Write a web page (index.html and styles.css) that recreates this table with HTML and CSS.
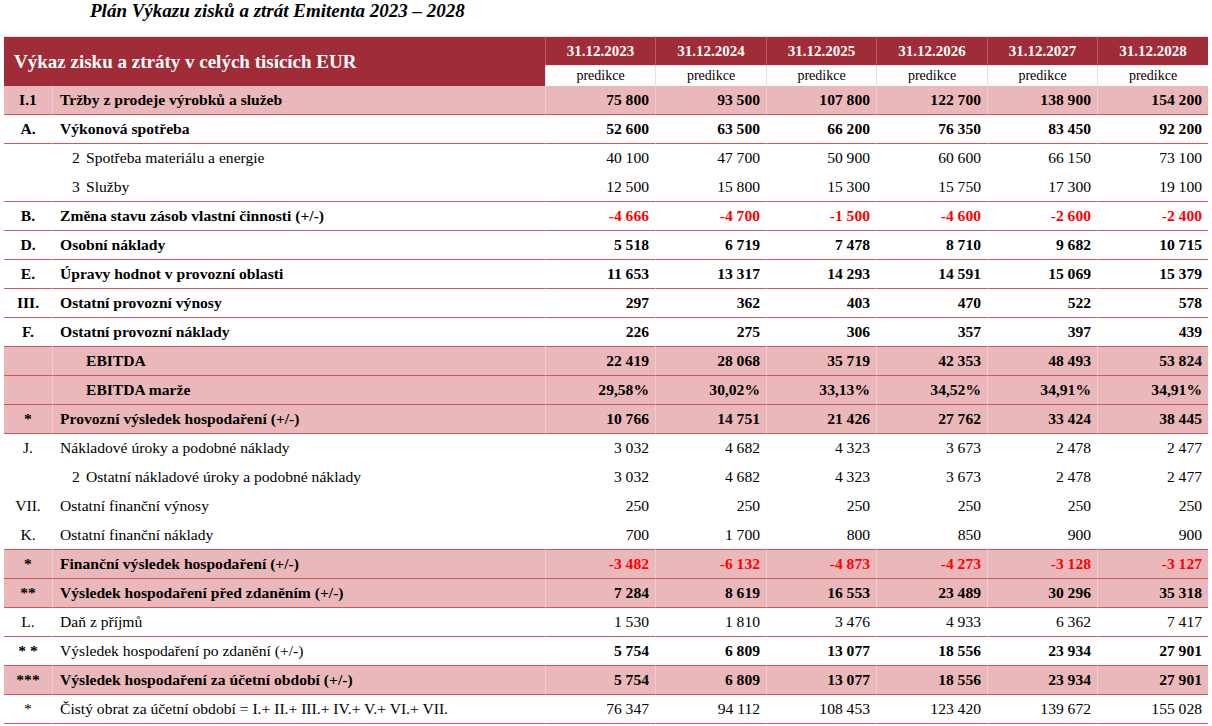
FILE: index.html
```html
<!DOCTYPE html>
<html lang="cs">
<head>
<meta charset="utf-8">
<title>Plán Výkazu zisků a ztrát Emitenta 2023 – 2028</title>
<link rel="stylesheet" href="styles.css">
</head>
<body>
<h1 class="title">Plán Výkazu zisků a ztrát Emitenta 2023 – 2028</h1>
<table class="pl">
  <colgroup>
    <col class="c-code"><col class="c-label">
    <col class="c-a"><col class="c-b"><col class="c-a"><col class="c-b"><col class="c-a"><col class="c-b">
  </colgroup>
  <thead>
    <tr class="h1">
      <th class="h-title" colspan="2" rowspan="2">Výkaz zisku a ztráty v celých tisících EUR</th>
      <th class="h-date">31.12.2023</th>
      <th class="h-date">31.12.2024</th>
      <th class="h-date">31.12.2025</th>
      <th class="h-date">31.12.2026</th>
      <th class="h-date">31.12.2027</th>
      <th class="h-date">31.12.2028</th>
    </tr>
    <tr class="h2">
      <td class="h-pred">predikce</td>
      <td class="h-pred">predikce</td>
      <td class="h-pred">predikce</td>
      <td class="h-pred">predikce</td>
      <td class="h-pred">predikce</td>
      <td class="h-pred">predikce</td>
    </tr>
  </thead>
  <tbody>
    <tr class="pink b">
      <td class="code">I.1</td><td class="lbl">Tržby z prodeje výrobků a služeb</td>
      <td class="v">75 800</td><td class="v">93 500</td><td class="v">107 800</td><td class="v">122 700</td><td class="v">138 900</td><td class="v">154 200</td>
    </tr>
    <tr class="b">
      <td class="code">A.</td><td class="lbl">Výkonová spotřeba</td>
      <td class="v">52 600</td><td class="v">63 500</td><td class="v">66 200</td><td class="v">76 350</td><td class="v">83 450</td><td class="v">92 200</td>
    </tr>
    <tr class="nb">
      <td class="code"></td><td class="lbl sub"><span class="n">2</span>Spotřeba materiálu a energie</td>
      <td class="v">40 100</td><td class="v">47 700</td><td class="v">50 900</td><td class="v">60 600</td><td class="v">66 150</td><td class="v">73 100</td>
    </tr>
    <tr>
      <td class="code"></td><td class="lbl sub"><span class="n">3</span>Služby</td>
      <td class="v">12 500</td><td class="v">15 800</td><td class="v">15 300</td><td class="v">15 750</td><td class="v">17 300</td><td class="v">19 100</td>
    </tr>
    <tr class="b neg">
      <td class="code">B.</td><td class="lbl">Změna stavu zásob vlastní činnosti (+/-)</td>
      <td class="v">-4 666</td><td class="v">-4 700</td><td class="v">-1 500</td><td class="v">-4 600</td><td class="v">-2 600</td><td class="v">-2 400</td>
    </tr>
    <tr class="b">
      <td class="code">D.</td><td class="lbl">Osobní náklady</td>
      <td class="v">5 518</td><td class="v">6 719</td><td class="v">7 478</td><td class="v">8 710</td><td class="v">9 682</td><td class="v">10 715</td>
    </tr>
    <tr class="b">
      <td class="code">E.</td><td class="lbl">Úpravy hodnot v provozní oblasti</td>
      <td class="v">11 653</td><td class="v">13 317</td><td class="v">14 293</td><td class="v">14 591</td><td class="v">15 069</td><td class="v">15 379</td>
    </tr>
    <tr class="b">
      <td class="code">III.</td><td class="lbl">Ostatní provozní výnosy</td>
      <td class="v">297</td><td class="v">362</td><td class="v">403</td><td class="v">470</td><td class="v">522</td><td class="v">578</td>
    </tr>
    <tr class="b">
      <td class="code">F.</td><td class="lbl">Ostatní provozní náklady</td>
      <td class="v">226</td><td class="v">275</td><td class="v">306</td><td class="v">357</td><td class="v">397</td><td class="v">439</td>
    </tr>
    <tr class="pink b">
      <td class="code"></td><td class="lbl ind">EBITDA</td>
      <td class="v">22 419</td><td class="v">28 068</td><td class="v">35 719</td><td class="v">42 353</td><td class="v">48 493</td><td class="v">53 824</td>
    </tr>
    <tr class="pink b">
      <td class="code"></td><td class="lbl ind">EBITDA marže</td>
      <td class="v">29,58%</td><td class="v">30,02%</td><td class="v">33,13%</td><td class="v">34,52%</td><td class="v">34,91%</td><td class="v">34,91%</td>
    </tr>
    <tr class="pink b">
      <td class="code">*</td><td class="lbl">Provozní výsledek hospodaření (+/-)</td>
      <td class="v">10 766</td><td class="v">14 751</td><td class="v">21 426</td><td class="v">27 762</td><td class="v">33 424</td><td class="v">38 445</td>
    </tr>
    <tr class="nb">
      <td class="code">J.</td><td class="lbl">Nákladové úroky a podobné náklady</td>
      <td class="v">3 032</td><td class="v">4 682</td><td class="v">4 323</td><td class="v">3 673</td><td class="v">2 478</td><td class="v">2 477</td>
    </tr>
    <tr class="nb">
      <td class="code"></td><td class="lbl sub"><span class="n">2</span>Ostatní nákladové úroky a podobné náklady</td>
      <td class="v">3 032</td><td class="v">4 682</td><td class="v">4 323</td><td class="v">3 673</td><td class="v">2 478</td><td class="v">2 477</td>
    </tr>
    <tr class="nb">
      <td class="code">VII.</td><td class="lbl">Ostatní finanční výnosy</td>
      <td class="v">250</td><td class="v">250</td><td class="v">250</td><td class="v">250</td><td class="v">250</td><td class="v">250</td>
    </tr>
    <tr>
      <td class="code">K.</td><td class="lbl">Ostatní finanční náklady</td>
      <td class="v">700</td><td class="v">1 700</td><td class="v">800</td><td class="v">850</td><td class="v">900</td><td class="v">900</td>
    </tr>
    <tr class="pink b negv">
      <td class="code">*</td><td class="lbl">Finanční výsledek hospodaření (+/-)</td>
      <td class="v">-3 482</td><td class="v">-6 132</td><td class="v">-4 873</td><td class="v">-4 273</td><td class="v">-3 128</td><td class="v">-3 127</td>
    </tr>
    <tr class="pink b">
      <td class="code">**</td><td class="lbl">Výsledek hospodaření před zdaněním (+/-)</td>
      <td class="v">7 284</td><td class="v">8 619</td><td class="v">16 553</td><td class="v">23 489</td><td class="v">30 296</td><td class="v">35 318</td>
    </tr>
    <tr>
      <td class="code">L.</td><td class="lbl">Daň z příjmů</td>
      <td class="v">1 530</td><td class="v">1 810</td><td class="v">3 476</td><td class="v">4 933</td><td class="v">6 362</td><td class="v">7 417</td>
    </tr>
    <tr class="bv">
      <td class="code bc">* *</td><td class="lbl">Výsledek hospodaření po zdanění (+/-)</td>
      <td class="v">5 754</td><td class="v">6 809</td><td class="v">13 077</td><td class="v">18 556</td><td class="v">23 934</td><td class="v">27 901</td>
    </tr>
    <tr class="pink b">
      <td class="code">***</td><td class="lbl">Výsledek hospodaření za účetní období (+/-)</td>
      <td class="v">5 754</td><td class="v">6 809</td><td class="v">13 077</td><td class="v">18 556</td><td class="v">23 934</td><td class="v">27 901</td>
    </tr>
    <tr>
      <td class="code">*</td><td class="lbl">Čistý obrat za účetní období = I.+ II.+ III.+ IV.+ V.+ VI.+ VII.</td>
      <td class="v">76 347</td><td class="v">94 112</td><td class="v">108 453</td><td class="v">123 420</td><td class="v">139 672</td><td class="v">155 028</td>
    </tr>
  </tbody>
</table>
</body>
</html>
```

FILE: styles.css
```css
body {
  margin: 0;
  background: #ffffff;
  color: #000000;
  font-family: "Liberation Serif", "Times New Roman", serif;
}

.title {
  margin: 0;
  padding-left: 90px;
  font-size: 19px;
  line-height: 22px;
  font-weight: bold;
  font-style: italic;
}

.pl {
  margin: 14px 0 0 4px;
  width: 1204px;
  table-layout: fixed;
  border-collapse: separate;
  border-spacing: 0;
  font-size: 15.6px;
}

.c-code { width: 48px; }
.c-label { width: 493px; }
.c-a { width: 110px; }
.c-b { width: 111px; }

.pl th,
.pl td {
  padding: 0;
  box-sizing: border-box;
  white-space: nowrap;
}

.h-title {
  height: 50px;
  background: #9f2c36;
  color: #ffffff;
  font-size: 19px;
  font-weight: bold;
  text-align: left;
  padding-left: 10px !important;
  border-top: 1px solid #e4e4e4;
}

.h-date {
  height: 30px;
  background: #9f2c36;
  color: #ffffff;
  font-size: 15px;
  font-weight: bold;
  text-align: center;
  border-top: 1px solid #e4e4e4;
  border-left: 1px solid #b95d64;
  border-bottom: 1px solid #f4e4e5;
}

.h-pred {
  height: 20px;
  font-size: 14px;
  text-align: center;
  background: #ffffff;
  border-left: 1px solid #e2e2e2;
}

.pl tbody td {
  height: 29px;
  border-bottom: 1px solid #c65a5e;
  border-left: 1px solid transparent;
}

.pl tbody td.code {
  border-left: none;
  text-align: center;
}

.pl tbody tr.nb td {
  border-bottom-color: transparent;
}

.pl tbody tr.pink td {
  background: #eab8ba;
  border-left-color: #f1cbcd;
}

.pl tbody tr.pink td.code {
  border-left: none;
}

.lbl {
  padding-left: 7px !important;
}

.lbl.sub {
  padding-left: 19px !important;
}

.lbl.ind {
  padding-left: 33px !important;
}

.n {
  display: inline-block;
  width: 14px;
}

.v {
  text-align: right;
  padding-right: 6px !important;
}

tr.b td,
tr.bv td.v,
td.bc {
  font-weight: bold;
}

tr.neg td.v,
tr.negv td.v {
  color: #ff0000;
}
```
